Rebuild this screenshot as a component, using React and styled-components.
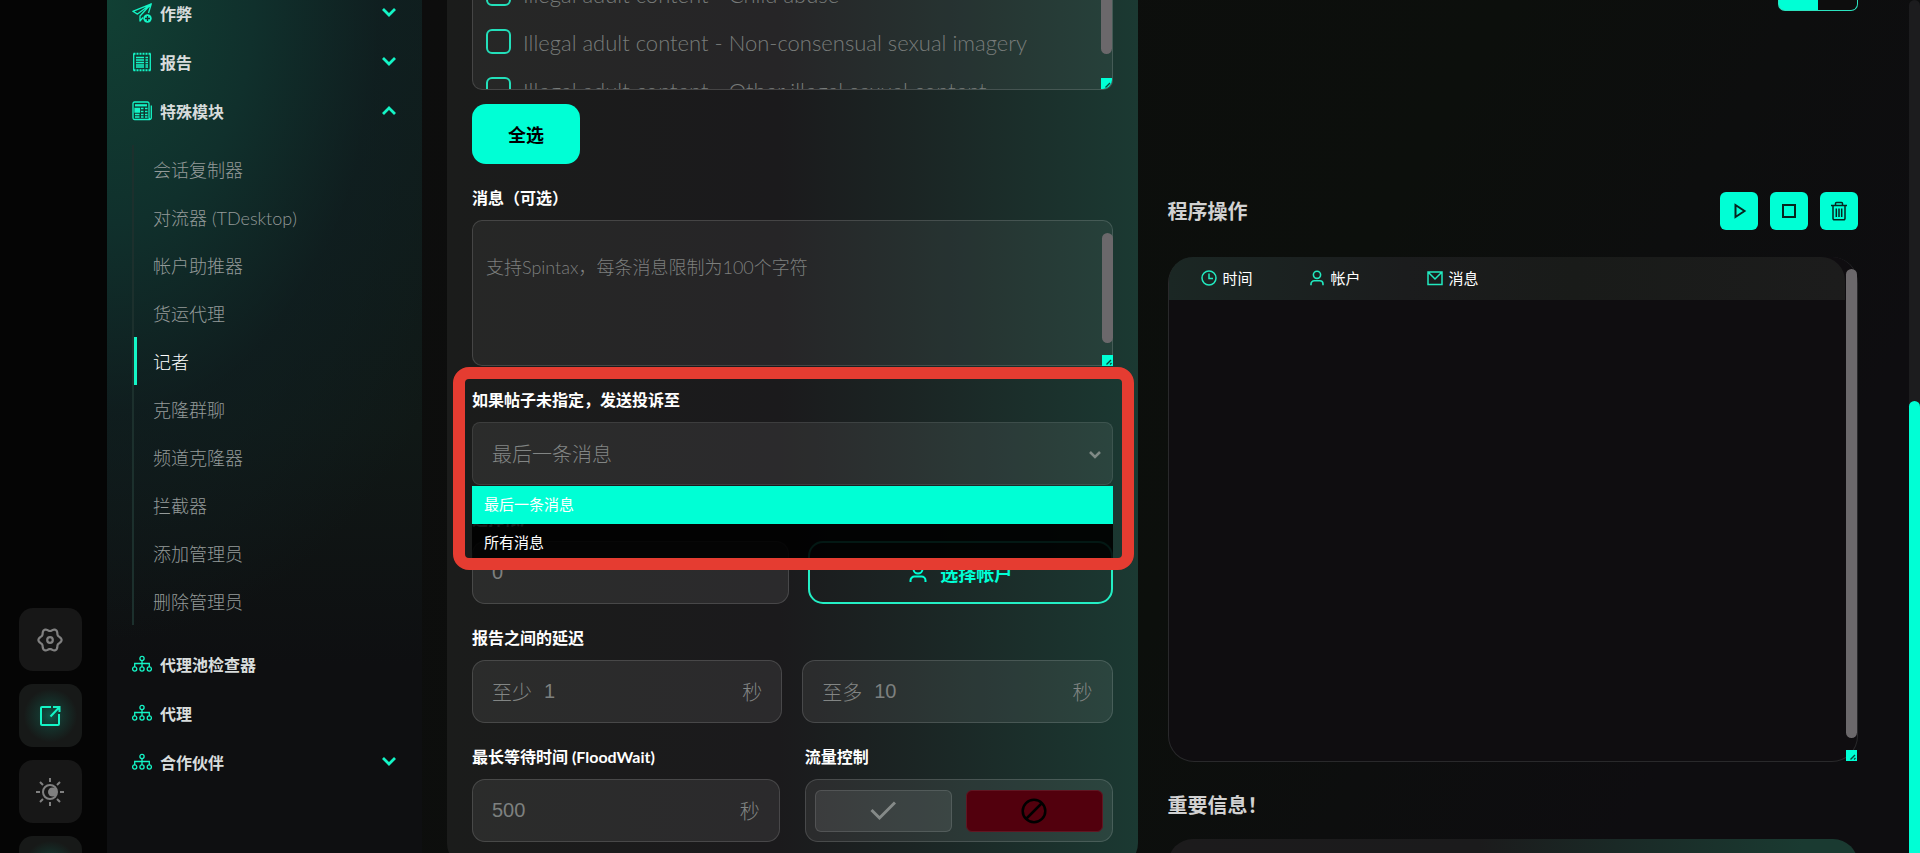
import styled, { createGlobalStyle } from 'styled-components';

const GlobalStyle = createGlobalStyle`
  * {
    box-sizing: border-box;
  }

  body {
    margin: 0;
    background: #0d0e0e;
    color: #ffffff;
    font-family: Lato, "Noto Sans CJK SC", sans-serif;
  }

  button, input, select, textarea {
    font-family: inherit;
  }

  ul {
    list-style: none;
    margin: 0;
    padding: 0;
  }
`;

const Page = styled.div`
  display: flex;
  height: 100vh;
  overflow: hidden;
`;

const Rail = styled.nav`
  display: flex;
  flex-direction: column;
  align-items: center;
  justify-content: flex-end;
  flex: none;
  gap: 13px;
  width: 107px;
  height: calc(100vh + 46px);
  padding-right: 7px;
  background: #050505;
`;

const RailButton = styled.button`
  display: flex;
  align-items: center;
  justify-content: center;
  flex: none;
  width: 63px;
  height: 63px;
  border: none;
  border-radius: 14px;
  color: ${({ $active }) => ($active ? '#14f5c6' : '#808080')};
  background: ${({ $active }) => ($active
    ? 'radial-gradient(circle, #0c5a4a 0, #15312b 28%, #171918 60%)'
    : '#171717')};
`;

const Sidebar = styled.aside`
  flex: none;
  width: 315px;
  padding: 0 25px;
  overflow: hidden;
  background:
    radial-gradient(ellipse 420px 640px at 0 0, #114034 0, #10302c 35%, rgba(15, 32, 35, .6) 65%, rgba(14, 16, 18, 0) 100%),
    linear-gradient(180deg, #101d1b 0, #101816 50%, #0e0f11 78%);
`;

const Menu = styled.ul`
  margin-top: -12px;
`;

const MenuButton = styled.button`
  display: flex;
  align-items: center;
  gap: 8px;
  width: 100%;
  height: 49px;
  padding: 0;
  border: none;
  background: transparent;
  color: #d8dcdc;
  font-size: 16px;
  font-weight: bold;
  text-align: left;

  svg {
    color: #14f5c6;
  }

  span {
    flex: 1;
  }
`;

const SubMenu = styled.ul`
  margin: 10px 0 14px;
  border-left: 2px solid #1c302d;
`;

const SubLink = styled.a`
  display: flex;
  align-items: center;
  height: 48px;
  padding-left: ${({ $active }) => ($active ? '16px' : '19px')};
  border-left: ${({ $active }) => ($active ? '3px solid #14f5c6' : 'none')};
  color: ${({ $active }) => ($active ? '#ffffff' : '#949a99')};
  font-size: 18px;
  font-weight: 300;
  text-decoration: none;
`;

const Main = styled.main`
  display: grid;
  grid-template-columns: minmax(0, 1fr) minmax(0, 1fr);
  flex: 1;
  align-items: start;
  gap: 30px;
  min-width: 0;
  padding: 0 51px 0 25px;
  background: linear-gradient(120deg, #0d0d0d 0, #0c0f0c 55%, #0e0d10 85%);
`;

const Panel = styled.form`
  padding: 0 25px 25px;
  border-radius: 0 0 24px 24px;
  background: linear-gradient(90deg, #1b1c1b 0, #1b1a1c 48%, #1b2524 68%, #1b3932 100%);
`;

const ScrollBox = styled.div`
  position: relative;
  display: flex;
  flex-direction: column;
  justify-content: flex-end;
  height: 90px;
  overflow: hidden;
  padding: 0 13px;
  border: 1px solid rgba(255, 255, 255, .14);
  border-top: none;
  border-radius: 0 0 10px 10px;
  background: rgba(255, 255, 255, .05);
`;

const CheckList = styled.div`
  display: flex;
  flex-direction: column;
  gap: 23px;
  margin-bottom: -13px;
`;

const CheckRow = styled.label`
  display: flex;
  align-items: center;
  gap: 12px;
  height: 25px;
  color: #787c7a;
  font-size: 22px;
  font-weight: 300;
  white-space: nowrap;

  span {
    padding-top: 2px;
  }
`;

const Checkbox = styled.input`
  appearance: none;
  flex: none;
  width: 25px;
  height: 25px;
  margin: 0;
  border: 2px solid #23dfba;
  border-radius: 6px;
`;

const ScrollTrack = styled.div`
  position: absolute;
  top: ${({ $top }) => $top};
  right: 0;
  bottom: 0;
  display: flex;
  flex-direction: column;
  gap: ${({ $gap }) => $gap || '12px'};
  width: 11px;
`;

const ScrollThumb = styled.div`
  flex: 1;
  border-radius: 6px;
  background: #6b686b;
`;

const Corner = styled.svg`
  flex: none;
  width: 11px;
  height: 11px;
  background: #00ffd5;
`;

const SelectAll = styled.button`
  display: block;
  width: 108px;
  height: 60px;
  margin-top: 14px;
  border: none;
  border-radius: 14px;
  background: #00ffd5;
  color: #000000;
  font-size: 18px;
  font-weight: bold;
`;

const Field = styled.div`
  position: relative;
  flex: ${({ $grow }) => $grow || 1} 1 0;
  min-width: 0;
  margin-top: 24px;
`;

const Label = styled.label`
  display: block;
  height: 20px;
  margin-bottom: 12px;
  color: #ffffff;
  font-size: 16px;
  font-weight: bold;
  line-height: 20px;
  white-space: nowrap;
`;

const Relative = styled.div`
  position: relative;
`;

const Textarea = styled.textarea`
  display: block;
  width: 100%;
  height: 146px;
  padding: 34px 13px 0;
  resize: none;
  border: 1px solid rgba(255, 255, 255, .14);
  border-radius: 10px;
  background: rgba(255, 255, 255, .05);
  color: #ffffff;
  font-size: 18px;
  font-weight: 300;
  line-height: 24px;

  &::placeholder {
    color: #7d7f7e;
  }
`;

const Highlight = styled.div`
  position: absolute;
  z-index: 3;
  inset: -23px -21px auto -19px;
  height: 203px;
  border: 12px solid #e53c31;
  border-radius: 16px;
  pointer-events: none;
`;

const Select = styled.select`
  appearance: none;
  display: block;
  width: 100%;
  height: 63px;
  padding: 0 19px;
  border: 1px solid rgba(255, 255, 255, .09);
  border-radius: 8px;
  background: rgba(255, 255, 255, .07);
  color: #828584;
  font-size: 20px;
  font-weight: 300;
`;

const SelectArrow = styled.svg`
  position: absolute;
  top: 28px;
  right: 12px;
`;

const Options = styled.ul`
  position: absolute;
  z-index: 2;
  top: 64px;
  left: 0;
  right: 0;
`;

const Option = styled.li`
  height: ${({ $active }) => ($active ? '38px' : '36px')};
  padding-left: 12px;
  background: ${({ $active }) => ($active ? '#00ffd5' : 'rgba(0, 0, 0, .9)')};
  color: #ffffff;
  font-size: 15px;
  line-height: 36px;
`;

const Row = styled.div`
  display: flex;
  align-items: flex-end;
  gap: ${({ $gap }) => $gap};
`;

const InputBox = styled.div`
  display: flex;
  align-items: center;
  gap: 12px;
  height: 63px;
  padding: 0 19px;
  border: 1px solid rgba(255, 255, 255, .14);
  border-radius: 13px;
  background: rgba(255, 255, 255, .07);
  color: #828584;
  font-size: 20px;
  font-weight: 300;
`;

const Input = styled.input`
  flex: 1;
  min-width: 0;
  padding: 0;
  border: none;
  background: transparent;
  color: #7d807f;
  font-family: "Liberation Sans", sans-serif;
  font-size: 20px;
`;

const AccountButton = styled.button`
  display: flex;
  align-items: center;
  justify-content: center;
  gap: 12px;
  width: 100%;
  height: 63px;
  border: 2px solid #23efc5;
  border-radius: 15px;
  background: transparent;
  color: #00ffd5;
  font-size: 18px;
  font-weight: bold;
`;

const ToggleBox = styled(InputBox)`
  gap: 14px;
  padding: 0 9px;
`;

const ToggleButton = styled.button`
  display: flex;
  align-items: center;
  justify-content: center;
  flex: 1;
  height: 42px;
  border: 1px solid ${({ $off }) => ($off ? '#611622' : 'rgba(255, 255, 255, .12)')};
  border-radius: 6px;
  background: ${({ $off }) => ($off ? '#52000d' : 'rgba(255, 255, 255, .08)')};
  color: ${({ $off }) => ($off ? '#000000' : '#858a88')};
`;

const Side = styled.section`
  min-width: 0;
`;

const Switch = styled.div`
  width: 80px;
  height: 11px;
  margin-left: auto;
  border: 1px solid #2be3bf;
  border-top: none;
  border-radius: 0 0 7px 7px;
  background: linear-gradient(90deg, #00ffd5 50%, #0d0d0d 50%);
`;

const Toolbar = styled.div`
  display: flex;
  align-items: center;
  gap: 12px;
  margin-top: 181px;
`;

const Title = styled.h2`
  flex: 1;
  margin: 0;
  color: #d2d2d2;
  font-size: 20px;
  line-height: 38px;
`;

const ToolButton = styled.button`
  display: flex;
  align-items: center;
  justify-content: center;
  width: 38px;
  height: 38px;
  padding: 0;
  border: none;
  border-radius: 6px;
  background: #00ffd5;
  color: #06251f;
`;

const LogBox = styled.div`
  position: relative;
  height: 505px;
  margin: 27px 0 24px;
  padding-right: 12px;
  border: 1px solid #29292b;
  border-top: none;
  border-radius: 26px;
  background: #0f0d10;
`;

const LogHead = styled.div`
  overflow: hidden;
  height: 43px;
  border-radius: 24px 24px 0 0;
  background: linear-gradient(90deg, #1b2724 0, #1b1c1d 35%, #191b19 60%, #1c1c1c 100%);
`;

const LogTable = styled.table`
  width: 100%;
  border-collapse: collapse;
  table-layout: fixed;

  th {
    height: 41px;
    padding: 0;
    font-size: 15px;
    font-weight: normal;
    text-align: left;
  }

  th:nth-child(1) {
    width: 140px;
    padding-left: 32px;
  }

  th:nth-child(2) {
    width: 118px;
  }
`;

const HeadCell = styled.div`
  display: flex;
  align-items: center;
  gap: 6px;
  color: #ffffff;

  svg {
    color: #22e8bf;
  }
`;

const InfoCard = styled.div`
  height: 80px;
  margin-top: 15px;
  border-radius: 25px;
  background: linear-gradient(90deg, #1c1b1c 0, #1b1b1c 45%, #1a2926 65%, #1a3a31 92%);
`;

const PageScroll = styled.div`
  flex: none;
  width: 11px;
  padding-top: 401px;
  border-radius: 6px 6px 0 0;
  background: #1c1c1e;
`;

const PageThumb = styled.div`
  height: 100%;
  border-radius: 6px 6px 0 0;
  background: #00ffd5;
`;

const gearPath = Array.from({ length: 73 }, (_, i) => {
  const angle = (i * 5 * Math.PI) / 180;
  const radius = 10.3 + 1.3 * Math.cos(6 * angle);
  const x = (13 + radius * Math.cos(angle)).toFixed(2);
  const y = (13 + radius * Math.sin(angle)).toFixed(2);
  return `${i ? 'L' : 'M'}${x} ${y}`;
}).join('');

function Icon({ size = 20, box = size, width = 1.5, children }) {
  return (
    <svg
      width={size}
      height={size}
      viewBox={`0 0 ${box} ${box}`}
      fill="none"
      stroke="currentColor"
      strokeWidth={width}
      aria-hidden="true"
    >
      {children}
    </svg>
  );
}

const GearIcon = () => (
  <Icon size={26} width={2.2}>
    <path d={`${gearPath}Z`} strokeLinejoin="round" />
    <circle cx="13" cy="13" r="2.8" />
  </Icon>
);

const ShareIcon = () => (
  <Icon size={22} width={2}>
    <path d="M12 2H3a1 1 0 0 0-1 1v16a1 1 0 0 0 1 1h16a1 1 0 0 0 1-1V9" />
    <path d="M11.500 11.500L20 2.500M14 2H20.500V7" />
  </Icon>
);

const SunIcon = () => (
  <Icon size={28} width={2}>
    <circle cx="14" cy="14" r="7" />
    <circle cx="16.500" cy="14" r="4.500" fill="currentColor" stroke="none" />
    <path d="M14 0v4M14 24v4M0 14h4M24 14h4M4 4l3 3M21 21l3 3M24 4l-3 3M7 21l-3 3" />
  </Icon>
);

const SlidersIcon = () => (
  <Icon size={30} width={3}>
    <path d="M6 0v28M15 0v28M24 0v28M2 9h8M11 18h8M20 9h8" />
  </Icon>
);

const PlaneIcon = () => (
  <Icon width={1.3}>
    <path d="M19.300 .8L.8 8.300l4.700 2.800L19.300 .8L8 13v5l3-3.500M19.300 .8L16.500 10" strokeLinejoin="round" />
    <circle cx="15.500" cy="15.500" r="4.200" fill="currentColor" stroke="none" />
    <path d="M15.500 13v5M13 15.500h5" stroke="#10372f" />
  </Icon>
);

const ReceiptIcon = () => (
  <Icon width={1.3}>
    <path d="M1.500 1.800h17M1.500 18.200h17" strokeWidth="2" strokeDasharray="2 1" />
    <path d="M1.700 1.500v17M18.300 1.500v17M4 5.500h8M4 8h8M4 10.500h8M4 13h8M4 15h8M13.500 5.500h2.500M13.500 8h2.500M13.500 10.500h2.500M13.500 13h2.500M13.500 15h2.500" />
  </Icon>
);

const NewsIcon = () => (
  <Icon width={1.3}>
    <path d="M17 16V2.500a1.500 1.500 0 0 0-1.500-1.500H2.500A1.500 1.500 0 0 0 1 2.500v14.500a1.500 1.500 0 0 0 1.500 1.500h15a1.700 1.700 0 0 0 1.800-1.700V4.500M17 16a2 2 0 0 0 1 2" />
    <path d="M3 4.300h12" strokeWidth="2.200" />
    <path d="M3 7.500h4.500v3.500h-4.500z" fill="currentColor" />
    <path d="M9 7.500h2.500M13 7.500h2.500M9 10.500h2.500M13 10.500h2.500M3 13.500h4.500M9 13.500h2.500M13 13.500h2.500M3 16h4.500M9 16h2.500M13 16h2.500" />
  </Icon>
);

const NetworkIcon = () => (
  <Icon width={1.3}>
    <circle cx="10" cy="4.500" r="2.100" />
    <circle cx="2.700" cy="15" r="2.100" />
    <circle cx="10" cy="15" r="2.100" />
    <circle cx="17.300" cy="15" r="2.100" />
    <path d="M10 6.500v6.500M2.700 13V9.500h14.600V13" />
  </Icon>
);

const Chevron = ({ up }) => (
  <Icon size={16} width={2.8}>
    <path d={up ? 'M2 11l6-6 6 6' : 'M2 4l6 6 6-6'} />
  </Icon>
);

const UserIcon = ({ size }) => (
  <Icon size={size} box={20} width={2}>
    <circle cx="10" cy="6" r="4.500" />
    <path d="M2.500 19v-1.500a4 4 0 0 1 4-4h7a4 4 0 0 1 4 4V19" />
  </Icon>
);

const ClockIcon = () => (
  <Icon size={16}>
    <circle cx="8" cy="8" r="7" />
    <path d="M8 3.500V8.500h4" />
  </Icon>
);

const MailIcon = () => (
  <Icon size={16}>
    <path d="M1 2h14v12.500H1zM1.500 2.500L8 9l6.500-6.500" />
  </Icon>
);

const PlayIcon = () => (
  <Icon size={18} width={2}>
    <path d="M5.500 3v12l9-6z" />
  </Icon>
);

const StopIcon = () => (
  <Icon size={18} width={2}>
    <path d="M3 3h12v12H3z" />
  </Icon>
);

const TrashIcon = () => (
  <Icon size={20}>
    <path d="M2 4.500h16M6.500 4V2.500a1 1 0 0 1 1-1h5a1 1 0 0 1 1 1V4M4 5v12.500a1.200 1.200 0 0 0 1.200 1.200h9.600a1.200 1.200 0 0 0 1.200-1.200V5M7.300 7.500v8.500M10 7.500v8.500M12.700 7.500v8.500" />
  </Icon>
);

const CheckIcon = () => (
  <Icon size={26} width={3}>
    <path d="M1.500 12l8 8L25 4.500" />
  </Icon>
);

const BanIcon = () => (
  <Icon size={26} width={2.5}>
    <circle cx="13" cy="13" r="11.300" />
    <path d="M5.500 20.500l15-15" />
  </Icon>
);

function Scrollbar({ top, gap }) {
  return (
    <ScrollTrack $top={top} $gap={gap} aria-hidden="true">
      <ScrollThumb />
      <Corner viewBox="0 0 11 11">
        <path d="M4.500 9.500L9 5M8 9.500l1.500-1.500" stroke="#08463b" strokeWidth="1.400" />
      </Corner>
    </ScrollTrack>
  );
}

const reasons = [
  'Illegal adult content - Child abuse',
  'Illegal adult content - Non-consensual sexual imagery',
  'Illegal adult content - Other illegal sexual content',
];

const topMenu = [
  { name: '作弊', icon: <PlaneIcon /> },
  { name: '报告', icon: <ReceiptIcon /> },
  { name: '特殊模块', icon: <NewsIcon />, open: true },
];

const modules = [
  '会话复制器',
  '对流器 (TDesktop)',
  '帐户助推器',
  '货运代理',
  '记者',
  '克隆群聊',
  '频道克隆器',
  '拦截器',
  '添加管理员',
  '删除管理员',
];

const bottomMenu = [
  { name: '代理池检查器' },
  { name: '代理' },
  { name: '合作伙伴', more: true },
];

export default function App() {
  return (
    <>
      <GlobalStyle />
      <Page>
        <Rail>
          <RailButton type="button" aria-label="设置"><GearIcon /></RailButton>
          <RailButton type="button" aria-label="分享" $active><ShareIcon /></RailButton>
          <RailButton type="button" aria-label="主题"><SunIcon /></RailButton>
          <RailButton type="button" aria-label="选项" $active><SlidersIcon /></RailButton>
        </Rail>

        <Sidebar>
          <Menu>
            {topMenu.map(({ name, icon, open }) => (
              <li key={name}>
                <MenuButton type="button">
                  {icon}
                  <span>{name}</span>
                  <Chevron up={open} />
                </MenuButton>
              </li>
            ))}
            <li>
              <SubMenu>
                {modules.map((name) => (
                  <li key={name}>
                    <SubLink href="#" $active={name === '记者'}>{name}</SubLink>
                  </li>
                ))}
              </SubMenu>
            </li>
            {bottomMenu.map(({ name, more }) => (
              <li key={name}>
                <MenuButton type="button">
                  <NetworkIcon />
                  <span>{name}</span>
                  {more && <Chevron />}
                </MenuButton>
              </li>
            ))}
          </Menu>
        </Sidebar>

        <Main>
          <Panel>
            <ScrollBox>
              <CheckList>
                {reasons.map((reason) => (
                  <CheckRow key={reason}>
                    <Checkbox type="checkbox" />
                    <span>{reason}</span>
                  </CheckRow>
                ))}
              </CheckList>
              <Scrollbar top="-20px" gap="24px" />
            </ScrollBox>
            <SelectAll type="button">全选</SelectAll>

            <Field>
              <Label htmlFor="message">消息（可选）</Label>
              <Relative>
                <Textarea id="message" placeholder="支持Spintax，每条消息限制为100个字符" />
                <Scrollbar top="13px" />
              </Relative>
            </Field>

            <Field>
              <Label htmlFor="target">如果帖子未指定，发送投诉至</Label>
              <Relative>
                <Select id="target" defaultValue="last">
                  <option value="last">最后一条消息</option>
                  <option value="all">所有消息</option>
                </Select>
                <SelectArrow width="12" height="10" viewBox="0 0 12 10" fill="none" stroke="#7f8985" strokeWidth="2.500">
                  <path d="M1 2l5 5 5-5" />
                </SelectArrow>
                <Options>
                  <Option $active>最后一条消息</Option>
                  <Option>所有消息</Option>
                </Options>
              </Relative>
              <Highlight />
            </Field>

            <Row $gap="19px">
              <Field $grow={1.04}>
                <Label htmlFor="accounts">选择帐户</Label>
                <InputBox>
                  <Input id="accounts" defaultValue="0" />
                </InputBox>
              </Field>
              <Field>
                <AccountButton type="button">
                  <UserIcon size={20} />
                  选择帐户
                </AccountButton>
              </Field>
            </Row>

            <Row $gap="20px">
              <Field>
                <Label htmlFor="delay-min">报告之间的延迟</Label>
                <InputBox>
                  <span>至少</span>
                  <Input id="delay-min" defaultValue="1" />
                  <span>秒</span>
                </InputBox>
              </Field>
              <Field>
                <InputBox>
                  <label htmlFor="delay-max">至多</label>
                  <Input id="delay-max" defaultValue="10" />
                  <span>秒</span>
                </InputBox>
              </Field>
            </Row>

            <Row $gap="25px">
              <Field>
                <Label htmlFor="flood-wait">最长等待时间 (FloodWait)</Label>
                <InputBox>
                  <Input id="flood-wait" defaultValue="500" />
                  <span>秒</span>
                </InputBox>
              </Field>
              <Field>
                <Label as="div">流量控制</Label>
                <ToggleBox>
                  <ToggleButton type="button" aria-label="开"><CheckIcon /></ToggleButton>
                  <ToggleButton type="button" aria-label="关" $off><BanIcon /></ToggleButton>
                </ToggleBox>
              </Field>
            </Row>
          </Panel>

          <Side>
            <Switch />
            <Toolbar>
              <Title>程序操作</Title>
              <ToolButton type="button" aria-label="开始"><PlayIcon /></ToolButton>
              <ToolButton type="button" aria-label="停止"><StopIcon /></ToolButton>
              <ToolButton type="button" aria-label="清除"><TrashIcon /></ToolButton>
            </Toolbar>
            <LogBox>
              <LogHead>
                <LogTable>
                  <thead>
                    <tr>
                      <th><HeadCell><ClockIcon />时间</HeadCell></th>
                      <th><HeadCell><UserIcon size={16} />帐户</HeadCell></th>
                      <th><HeadCell><MailIcon />消息</HeadCell></th>
                    </tr>
                  </thead>
                </LogTable>
              </LogHead>
              <Scrollbar top="12px" />
            </LogBox>
            <Title>重要信息！</Title>
            <InfoCard />
          </Side>
        </Main>

        <PageScroll aria-hidden="true">
          <PageThumb />
        </PageScroll>
      </Page>
    </>
  );
}
